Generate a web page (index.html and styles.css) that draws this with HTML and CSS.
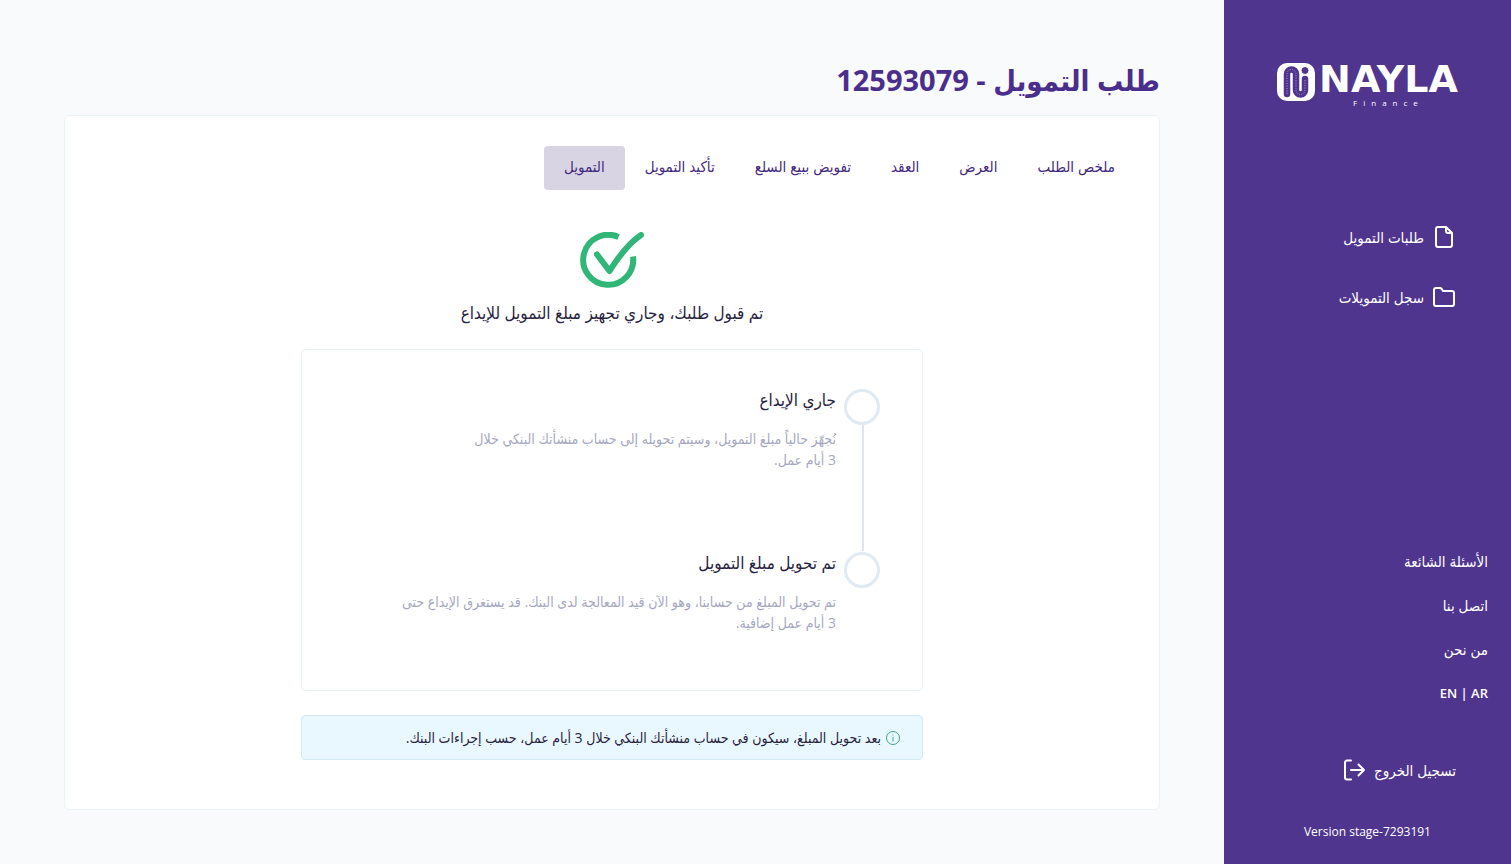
FILE: index.html
```html
<!DOCTYPE html>
<html lang="ar" dir="rtl">
<head>
    <meta charset="UTF-8">
    <meta name="viewport" content="width=device-width, initial-scale=1.0">
    <title>Nayla Finance</title>
    <link rel="stylesheet" href="styles.css">
</head>
<body>
    <aside class="sidebar">
        <a href="#" class="logo" dir="ltr">
            <svg class="logo-mark" viewBox="0 0 38 38" aria-hidden="true">
                <rect width="38" height="38" rx="10" fill="#fff"/>
                <path d="M10 31V11a4.500 4.500 0 0 1 9 0v16a4.500 4.500 0 0 0 9 0V16" fill="none" stroke="#50358f" stroke-width="6.500" stroke-linecap="round"/>
                <path d="M10 31V11a4.500 4.500 0 0 1 9 0v16a4.500 4.500 0 0 0 9 0V16" fill="none" stroke="#a99bc9" stroke-width="1" stroke-dasharray="1 1.500"/>
                <circle cx="28" cy="7.500" r="4" fill="#50358f" stroke="#fff"/>
            </svg>
            <span class="logo-text">
                <span class="logo-name">NAYLA</span>
                <span class="logo-sub">Finance</span>
            </span>
        </a>

        <nav class="menu">
            <a href="#">
                <svg viewBox="0 0 24 24"><path d="M14 2H6a2 2 0 0 0-2 2v16a2 2 0 0 0 2 2h12a2 2 0 0 0 2-2V8zM14 2v4a2 2 0 0 0 2 2h4"/></svg>
                طلبات التمويل
            </a>
            <a href="#">
                <svg viewBox="0 0 24 24"><path d="M2 5a2 2 0 0 1 2-2h4a2 2 0 0 1 1.600.8L11 6h9a2 2 0 0 1 2 2v11a2 2 0 0 1-2 2H4a2 2 0 0 1-2-2z"/></svg>
                سجل التمويلات
            </a>
        </nav>

        <nav class="links">
            <a href="#">الأسئلة الشائعة</a>
            <a href="#">اتصل بنا</a>
            <a href="#">من نحن</a>
            <a href="#" class="lang" dir="ltr">EN | AR</a>
        </nav>

        <button type="button" class="logout">
            تسجيل الخروج
            <svg viewBox="0 0 24 24"><path d="M9 2.500H5a2 2 0 0 0-2 2v15a2 2 0 0 0 2 2h4M9 12h13M16.500 6.500 22 12l-5.500 5.500"/></svg>
        </button>
        <p class="version" dir="ltr">Version stage-7293191</p>
    </aside>

    <main class="content">
        <h1>طلب التمويل - 12593079</h1>

        <section class="card">
            <nav class="tabs">
                <a href="#">ملخص الطلب</a>
                <a href="#">العرض</a>
                <a href="#">العقد</a>
                <a href="#">تفويض ببيع السلع</a>
                <a href="#">تأكيد التمويل</a>
                <a href="#" class="active">التمويل</a>
            </nav>

            <div class="status">
                <svg class="check" viewBox="0 0 64 58" aria-hidden="true">
                    <path d="M38.500 5A25 25 0 1 0 53 24.500"/>
                    <path d="M17 22.500 29.500 39Q46 13 61 3" stroke-linecap="round" stroke-linejoin="round"/>
                </svg>
                <h2>تم قبول طلبك، وجاري تجهيز مبلغ التمويل للإيداع</h2>
            </div>

            <ol class="steps">
                <li>
                    <span class="dot"></span>
                    <div>
                        <h3>جاري الإيداع</h3>
                        <p>نُجهّز حالياً مبلغ التمويل، وسيتم تحويله إلى حساب منشأتك البنكي خلال<br>3 أيام عمل.</p>
                    </div>
                </li>
                <li>
                    <span class="dot"></span>
                    <div>
                        <h3>تم تحويل مبلغ التمويل</h3>
                        <p>تم تحويل المبلغ من حسابنا، وهو الآن قيد المعالجة لدى البنك. قد يستغرق الإيداع حتى<br>3 أيام عمل إضافية.</p>
                    </div>
                </li>
            </ol>

            <div class="notice">
                <svg viewBox="0 0 16 16" aria-hidden="true"><circle cx="8" cy="8" r="6.500"/><path d="M8 7v4.500M8 4.500v1"/></svg>
                <p>بعد تحويل المبلغ، سيكون في حساب منشأتك البنكي خلال 3 أيام عمل، حسب إجراءات البنك.</p>
            </div>
        </section>
    </main>
</body>
</html>
```
FILE: styles.css
```css
* {
    box-sizing: border-box;
}

body {
    margin: 0;
    min-height: 100vh;
    display: flex;
    font-family: "Open Sans", "DejaVu Sans Condensed", "DejaVu Sans", sans-serif;
    font-size: 14px;
    color: #28233f;
    background: #f9fafc;
}

h1, h2, h3, p, ol {
    margin: 0;
    padding: 0;
}

a {
    color: inherit;
    text-decoration: none;
}

.sidebar {
    flex: 0 0 19%;
    display: flex;
    flex-direction: column;
    padding: 63px 23px 24px;
    background: #50358f;
    color: #fff;
    font-size: 15px;
    font-weight: 500;
}

.logo {
    display: flex;
    justify-content: center;
    align-items: flex-start;
    gap: 4px;
    height: 42px;
}

.logo-mark {
    width: 38px;
    height: 38px;
}

.logo-text {
    display: flex;
    flex-direction: column;
    align-items: center;
    gap: 4px;
}

.logo-name {
    font-family: "DejaVu Sans", sans-serif;
    font-size: 38px;
    font-weight: bold;
    line-height: 32px;
}

.logo-sub {
    font-size: 8px;
    line-height: 8px;
    letter-spacing: 6px;
}

.menu {
    display: flex;
    flex-direction: column;
    gap: 36px;
    margin-top: 120px;
    padding: 0 32px;
}

.menu a,
.logout {
    display: flex;
    align-items: center;
    gap: 8px;
    line-height: 24px;
}

.menu svg,
.logout svg {
    width: 24px;
    height: 24px;
    fill: none;
    stroke: #fff;
    stroke-width: 2;
    stroke-linecap: round;
    stroke-linejoin: round;
}

.links {
    display: flex;
    flex-direction: column;
    align-items: flex-start;
    gap: 20px;
    margin-top: auto;
    line-height: 24px;
}

.links .lang {
    font-size: 13px;
    font-weight: 600;
}

.logout {
    margin: 53px 32px 0;
    padding: 0;
    border: 0;
    background: none;
    color: inherit;
    font: inherit;
    line-height: 24px;
    cursor: pointer;
}

.version {
    margin-top: 42px;
    font-size: 12px;
    line-height: 16px;
    text-align: center;
}

.content {
    flex: 1;
    display: flex;
    flex-direction: column;
    padding: 56px 64px 54px;
}

h1 {
    margin-bottom: 11px;
    font-size: 29px;
    line-height: 48px;
    color: #4b2e8c;
}

.card {
    flex: 1;
    padding: 30px 24px;
    border: 1px solid #eaf4f9;
    border-radius: 6px;
    background: #fff;
}

.tabs {
    display: flex;
    font-size: 15px;
    color: #44297f;
}

.tabs a {
    padding: 0 20px 4px;
    border-radius: 4px;
    line-height: 40px;
    white-space: nowrap;
}

.tabs .active {
    background: #d8d4e4;
}

.status {
    display: flex;
    flex-direction: column;
    align-items: center;
    margin-top: 42px;
}

.check {
    width: 64px;
    height: 58px;
    fill: none;
    stroke: #30b777;
    stroke-width: 6;
}

h2,
h3 {
    font-size: 17px;
    font-weight: 400;
    line-height: 24px;
}

h2 {
    margin-top: 11px;
}

.steps,
.notice {
    max-width: 622px;
    margin: 24px auto 0;
    border: 1px solid #e6f0f6;
    border-radius: 4px;
}

.steps {
    padding: 38px 42px 0;
    list-style: none;
}

.steps li {
    position: relative;
    display: flex;
    gap: 8px;
    min-height: 163px;
}

.steps li:last-child {
    min-height: 139px;
}

/* line between the two circles */
.steps li:first-child::before {
    content: "";
    position: absolute;
    top: 37px;
    bottom: 0;
    right: 16px;
    width: 2px;
    background: #dbe8f0;
}

.dot {
    flex: none;
    width: 36px;
    height: 36px;
    margin-top: 1px;
    border: 3px solid #dfeaf2;
    border-radius: 50%;
}

.steps p {
    margin-top: 16px;
    line-height: 21px;
    color: #a5a7c0;
    white-space: nowrap;
}

.notice {
    display: flex;
    align-items: center;
    gap: 4px;
    padding: 11px 21px;
    border-color: #d3eaf5;
    line-height: 21px;
    background: #e9f8ff;
}

.notice svg {
    flex: none;
    width: 16px;
    height: 16px;
    fill: none;
    stroke: #43a47e;
}
```
